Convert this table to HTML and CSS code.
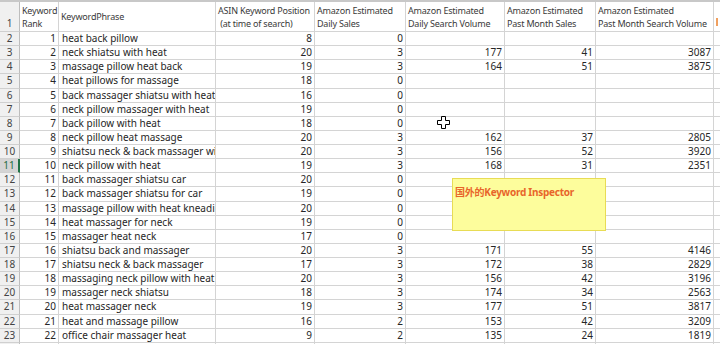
FILE: index.html
```html
<!DOCTYPE html>
<html>
<head>
<meta charset="utf-8">
<link rel="stylesheet" href="styles.css">
</head>
<body>
<div class="sheet">
  <div class="topbar"></div>
  <div class="grid">
    <div class="rh rh-head">1</div>
    <div class="hd">Keyword<br>Rank</div>
    <div class="hd single">KeywordPhrase</div>
    <div class="hd">ASIN Keyword Position<br>&nbsp;(at time of search)</div>
    <div class="hd">Amazon Estimated<br>Daily Sales</div>
    <div class="hd">Amazon Estimated<br>Daily Search Volume</div>
    <div class="hd">Amazon Estimated<br>Past Month Sales</div>
    <div class="hd">Amazon Estimated<br>Past Month Search Volume</div>
    <div class="hd edge"><span class="mark"></span></div>

    <div class="rh">2</div><div class="c n">1</div><div class="c t">heat back pillow</div><div class="c n">8</div><div class="c n">0</div><div class="c"></div><div class="c"></div><div class="c"></div><div class="c edge"></div>
    <div class="rh">3</div><div class="c n">2</div><div class="c t">neck shiatsu with heat</div><div class="c n">20</div><div class="c n">3</div><div class="c n">177</div><div class="c n">41</div><div class="c n">3087</div><div class="c edge"></div>
    <div class="rh">4</div><div class="c n">3</div><div class="c t">massage pillow heat back</div><div class="c n">19</div><div class="c n">3</div><div class="c n">164</div><div class="c n">51</div><div class="c n">3875</div><div class="c edge"></div>
    <div class="rh">5</div><div class="c n">4</div><div class="c t">heat pillows for massage</div><div class="c n">18</div><div class="c n">0</div><div class="c"></div><div class="c"></div><div class="c"></div><div class="c edge"></div>
    <div class="rh">6</div><div class="c n">5</div><div class="c t">back massager shiatsu with heat</div><div class="c n">16</div><div class="c n">0</div><div class="c"></div><div class="c"></div><div class="c"></div><div class="c edge"></div>
    <div class="rh">7</div><div class="c n">6</div><div class="c t">neck pillow massager with heat</div><div class="c n">19</div><div class="c n">0</div><div class="c"></div><div class="c"></div><div class="c"></div><div class="c edge"></div>
    <div class="rh">8</div><div class="c n">7</div><div class="c t">back pillow with heat</div><div class="c n">18</div><div class="c n">0</div><div class="c"></div><div class="c"></div><div class="c"></div><div class="c edge"></div>
    <div class="rh">9</div><div class="c n">8</div><div class="c t">neck pillow heat massage</div><div class="c n">20</div><div class="c n">3</div><div class="c n">162</div><div class="c n">37</div><div class="c n">2805</div><div class="c edge"></div>
    <div class="rh">10</div><div class="c n">9</div><div class="c t">shiatsu neck &amp; back massager with heat</div><div class="c n">20</div><div class="c n">3</div><div class="c n">156</div><div class="c n">52</div><div class="c n">3920</div><div class="c edge"></div>
    <div class="rh sel">11</div><div class="c n">10</div><div class="c t">neck pillow with heat</div><div class="c n">19</div><div class="c n">3</div><div class="c n">168</div><div class="c n">31</div><div class="c n">2351</div><div class="c edge"></div>
    <div class="rh">12</div><div class="c n">11</div><div class="c t">back massager shiatsu car</div><div class="c n">20</div><div class="c n">0</div><div class="c"></div><div class="c"></div><div class="c"></div><div class="c edge"></div>
    <div class="rh">13</div><div class="c n">12</div><div class="c t">back massager shiatsu for car</div><div class="c n">19</div><div class="c n">0</div><div class="c"></div><div class="c"></div><div class="c"></div><div class="c edge"></div>
    <div class="rh">14</div><div class="c n">13</div><div class="c t">massage pillow with heat kneading</div><div class="c n">20</div><div class="c n">0</div><div class="c"></div><div class="c"></div><div class="c"></div><div class="c edge"></div>
    <div class="rh">15</div><div class="c n">14</div><div class="c t">heat massager for neck</div><div class="c n">19</div><div class="c n">0</div><div class="c"></div><div class="c"></div><div class="c"></div><div class="c edge"></div>
    <div class="rh">16</div><div class="c n">15</div><div class="c t">massager heat neck</div><div class="c n">17</div><div class="c n">0</div><div class="c"></div><div class="c"></div><div class="c"></div><div class="c edge"></div>
    <div class="rh">17</div><div class="c n">16</div><div class="c t">shiatsu back and massager</div><div class="c n">20</div><div class="c n">3</div><div class="c n">171</div><div class="c n">55</div><div class="c n">4146</div><div class="c edge"></div>
    <div class="rh">18</div><div class="c n">17</div><div class="c t">shiatsu neck &amp; back massager</div><div class="c n">17</div><div class="c n">3</div><div class="c n">172</div><div class="c n">38</div><div class="c n">2829</div><div class="c edge"></div>
    <div class="rh">19</div><div class="c n">18</div><div class="c t">massaging neck pillow with heat</div><div class="c n">20</div><div class="c n">3</div><div class="c n">156</div><div class="c n">42</div><div class="c n">3196</div><div class="c edge"></div>
    <div class="rh">20</div><div class="c n">19</div><div class="c t">massager neck shiatsu</div><div class="c n">18</div><div class="c n">3</div><div class="c n">174</div><div class="c n">34</div><div class="c n">2563</div><div class="c edge"></div>
    <div class="rh">21</div><div class="c n">20</div><div class="c t">heat massager neck</div><div class="c n">19</div><div class="c n">3</div><div class="c n">177</div><div class="c n">51</div><div class="c n">3817</div><div class="c edge"></div>
    <div class="rh">22</div><div class="c n">21</div><div class="c t">heat and massage pillow</div><div class="c n">16</div><div class="c n">2</div><div class="c n">153</div><div class="c n">42</div><div class="c n">3209</div><div class="c edge"></div>
    <div class="rh">23</div><div class="c n">22</div><div class="c t">office chair massager heat</div><div class="c n">9</div><div class="c n">2</div><div class="c n">135</div><div class="c n">24</div><div class="c n">1819</div><div class="c edge"></div>
    <div class="rh">24</div><div class="c"></div><div class="c"></div><div class="c"></div><div class="c"></div><div class="c"></div><div class="c"></div><div class="c"></div><div class="c edge"></div>
  </div>

  <div class="comment">国外的Keyword Inspector</div>

  <svg class="cursor" width="13" height="13" viewBox="0 0 13 13">
    <path d="M4.5 0.5h4v4h4v4h-4v4h-4v-4h-4v-4h4z" fill="#fff" stroke="#000" stroke-width="1"/>
  </svg>
</div>
</body>
</html>
```
FILE: styles.css
```css
* { box-sizing: border-box; }
html, body { margin: 0; padding: 0; background: #fff; }
body { width: 720px; height: 344px; overflow: hidden; font-family: "Noto Sans", "Noto Sans CJK SC", sans-serif; color: #222; }
.sheet { position: relative; width: 720px; height: 344px; overflow: hidden; }
.topbar { height: 2px; background: #c8c8c8; }
.grid {
  display: grid;
  grid-template-columns: 20px 39px 157px 99px 91px 99px 91px 118px 6px;
  grid-template-rows: 30px;
  grid-auto-rows: 14.14px;
}
.rh {
  background: #f0f0f0;
  border-right: 1px solid #bdbdbd;
  border-bottom: 1px solid #d0d0d0;
  font-size: 10px;
  line-height: 13px;
  color: #444;
  text-align: center;
  overflow: hidden;
}
.rh-head { display: flex; align-items: flex-end; justify-content: center; padding-bottom: 1px; }
.rh.sel { background: #d4d4d4; color: #1d6b3d; border-right: 2px solid #217346; }
.hd {
  border-right: 1px solid #d4d4d4;
  border-bottom: 1px solid #d4d4d4;
  font-size: 9px;
  letter-spacing: -0.2px;
  line-height: 13px;
  color: #3a3a3a;
  padding: 2px 1px 0 2px;
  white-space: nowrap;
  overflow: hidden;
}
.hd.single { display: flex; align-items: center; padding-top: 0; }
.c {
  border-right: 1px solid #d4d4d4;
  border-bottom: 1px solid #d4d4d4;
  font-size: 10px;
  line-height: 13px;
  white-space: nowrap;
  overflow: hidden;
  color: #262626;
}
.c.n { text-align: right; padding-right: 2px; }
.c.t { padding-left: 3px; }
.edge { border-right: none; }
.mark { display: block; width: 2px; height: 8px; margin-top: 14px; background: #f0a060; }
.comment {
  position: absolute;
  left: 452px;
  top: 178px;
  width: 154px;
  height: 53px;
  background: #fdfd9c;
  border: 1px solid #e8dc55;
  color: #e8652a;
  font-weight: bold;
  font-size: 10px;
  letter-spacing: -0.25px;
  line-height: 12px;
  padding: 7px 0 0 2px;
  white-space: nowrap;
}
.cursor { position: absolute; left: 437px; top: 116px; }
```
